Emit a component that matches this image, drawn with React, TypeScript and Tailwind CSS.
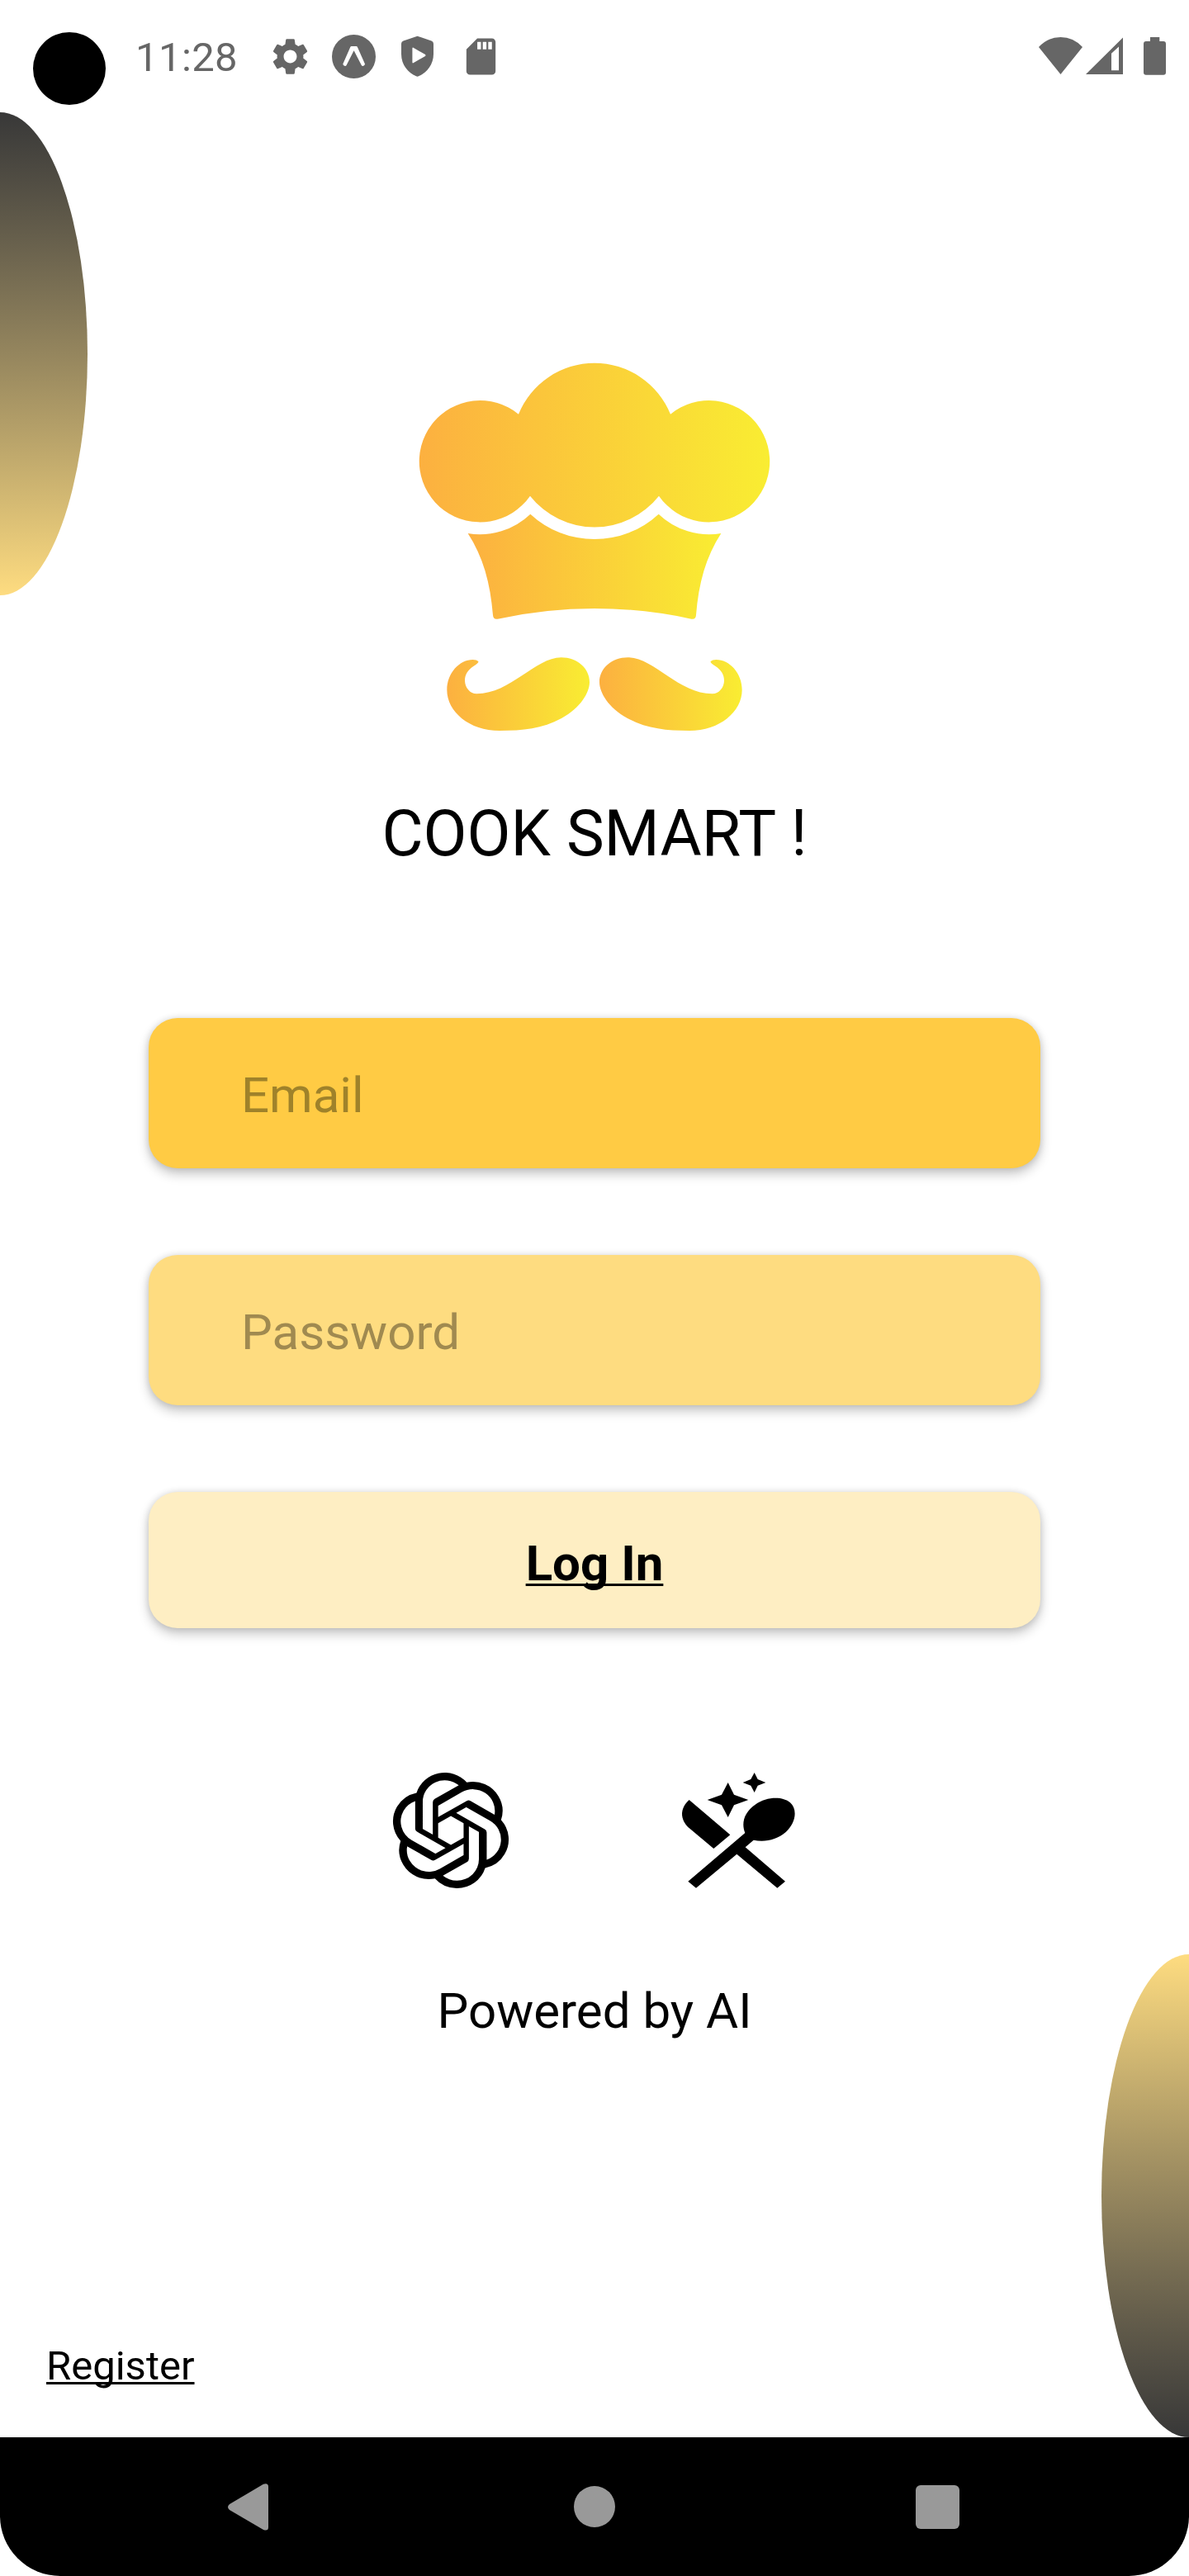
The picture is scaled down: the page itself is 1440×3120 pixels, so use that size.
import React from "react";
import { SiOpenai } from "react-icons/si";
import { MdSettings, MdSdCard } from "react-icons/md";

function ExpoIcon() {
  return (
    <svg className="size-[53px]" viewBox="0 0 53 53">
      <circle cx="26.5" cy="26.5" r="26.5" fill="#666" />
      <path
        fill="#fff"
        d="M23.6 14h6c.6 0 1 .3 1.300 .9L40 35.500c-.3 1.300-1.400 2.400-2.800 2.500-.6 0-1-.3-1.400-1L26.600 19.300 17.600 37c-.4.7-.8 1-1.400 1-1.400-.1-2.600-1.200-2.900-2.500L22.300 14.900c.3-.6.7-.9 1.300-.9z"
      />
    </svg>
  );
}

function ShieldIcon() {
  return (
    <svg className="h-[53px] w-[53px]" viewBox="0 0 53 53">
      <path
        fill="#666"
        fillRule="evenodd"
        d="M26.500 1.700 43.500 7.600Q46 8.600 46 11V23.500C46 36.500 37.500 46.500 28 50.300Q26.500 51 25 50.300C15.500 46.500 7 36.500 7 23.500V11Q7 8.600 9.500 7.600ZM20.400 16.500V33.500Q20.600 35 22 34L36 26Q37 25 36 24L22 16Q20.600 15 20.400 16.500Z"
      />
    </svg>
  );
}

function StatusBar() {
  return (
    <header className="flex h-[136px] items-start text-[#666]">
      <div className="mt-[39px] ml-10 size-[88px] rounded-full bg-black" />
      <span className="mt-[41px] ml-[36px] w-[123px] text-[49px] leading-[57px] tracking-[0.4px] whitespace-nowrap">
        11:28
      </span>
      <div className="mt-[42px] ml-[38px] flex gap-6">
        <MdSettings className="size-[53px]" />
        <ExpoIcon />
        <ShieldIcon />
        <MdSdCard className="size-[53px]" />
      </div>
      <div className="mt-[45px] mr-7 ml-auto flex items-start">
        <svg className="h-[46px] w-[53px]" viewBox="0 0 53 46" fill="currentColor">
          <path d="M0 12Q11 0 26.500 0T53 12L26.500 45Z" />
        </svg>
        <svg className="ml-1 h-[46px] w-[45px]" viewBox="0 0 45 46" fill="currentColor" fillRule="evenodd">
          <path d="M0 45 45 .5V45ZM31 40.300H40V11.500L31 19.700Z" />
        </svg>
        <svg className="ml-[25px] h-[46px] w-[27px]" viewBox="0 0 27 46" fill="currentColor">
          <path d="M8 0H19.300V5H24Q27 5 27 8V42.700Q27 45.700 24 45.700H3Q0 45.700 0 42.700V8Q0 5 3 5H8Z" />
        </svg>
      </div>
    </header>
  );
}

const MOUSTACHE =
  "M268 1143Q262 1137 248 1137C200 1137 154 1185 154 1247C154 1325 235 1395 345 1395C430 1395 500 1388 570 1350C640 1312 672 1256 672 1219C672 1168 627 1129 569 1129C475 1129 385 1261 262 1261C237 1261 219 1238 219 1213C219 1192 229 1175 250 1161Q271 1148 268 1143Z";

function ChefLogo() {
  return (
    <svg className="h-[480px] w-[460px]" viewBox="0 0 1380 1440">
      <defs>
        <linearGradient id="warm">
          <stop offset="0" stopColor="#fcb040" />
          <stop offset="1" stopColor="#f9ed32" />
        </linearGradient>
        <linearGradient id="warmFlipped">
          <stop offset="0" stopColor="#f9ed32" />
          <stop offset="1" stopColor="#fcb040" />
        </linearGradient>
      </defs>
      <path
        fill="url(#warm)"
        d="M414 245A298 298 0 0 1 966 245A221 221 0 1 1 924 542A298 298 0 0 1 456 542A221 221 0 1 1 414 245Z"
      />
      <path
        fill="url(#warm)"
        d="M230 678A266 266 0 0 0 457 608A343 343 0 0 0 923 608A266 266 0 0 0 1150 678C1095 762 1068 860 1059 975Q1058 992 1042 989Q690 913 338 989Q322 992 321 975C312 860 285 762 230 678Z"
      />
      <path fill="url(#warm)" d={MOUSTACHE} />
      <path fill="url(#warmFlipped)" d={MOUSTACHE} transform="translate(1380 0) scale(-1 1)" />
    </svg>
  );
}

function UtensilsIcon() {
  return (
    <svg className="h-[140px] w-[137px]" viewBox="1098 81 411 420" preserveAspectRatio="none">
      <path d="M1361 81 1373 105 1402 117 1373 128 1361 153 1348 128 1319 117 1348 105Z" />
      <path d="M1265 117 1287 161 1339 180 1287 199 1265 243 1242 199 1190 180 1242 161Z" />
      <path d="M1124 180 1273 307 1213 357 1121 280C1090 250 1090 210 1124 180Z" />
      <path d="M1120 476 1327 300C1312 263 1325 224 1364 197C1405 168 1463 166 1491 190C1519 216 1511 263 1475 297C1442 326 1397 335 1358 326L1328 352 1473 476 1444 500 1297 377 1149 500Z" />
    </svg>
  );
}

const CARD =
  "flex w-[1080px] rounded-[35px] shadow-[0_7px_14px_rgba(0,0,0,0.22),0_0_8px_rgba(0,0,0,0.12)]";

export default function App() {
  return (
    <div className="flex h-[3120px] w-[1440px] flex-col overflow-hidden bg-white font-[Roboto,sans-serif] text-black">
      <StatusBar />
      <main className="relative flex h-[2816px] flex-col items-center">
        <div className="absolute top-0 left-[-106px] h-[585px] w-[212px] rounded-[50%] bg-linear-to-b from-[#383838] to-[#fedc80]" />
        <div className="absolute right-[-106px] bottom-0 h-[585px] w-[212px] rounded-[50%] bg-linear-to-b from-[#fedc80] to-[#383838]" />
        <div className="mt-[284px]">
          <ChefLogo />
        </div>
        <h1 className="mt-[65px] text-[77px] leading-[90px]">COOK SMART !</h1>
        <form className="mt-[178px] flex flex-col">
          <input
            type="text"
            placeholder="Email"
            className={`${CARD} h-[182px] bg-[#ffcb44] px-[112px] pt-[4px] text-[60px] placeholder:text-[#9f822a] placeholder:opacity-100`}
          />
          <input
            type="text"
            placeholder="Password"
            className={`${CARD} mt-[105px] h-[182px] bg-[#fedc80] px-[112px] pt-[4px] text-[60px] placeholder:text-[#a08a50] placeholder:opacity-100`}
          />
          <button
            type="button"
            className={`${CARD} mt-[105px] h-[165px] items-center justify-center bg-[#feeec3] pt-[8px] text-[60px] font-bold underline decoration-[3px] underline-offset-[4px] [text-decoration-skip-ink:none]`}
          >
            Log In
          </button>
        </form>
        <div className="mt-[175px] mr-[3px] flex w-[488px] justify-between">
          <SiOpenai className="h-[140px] w-[142px]" preserveAspectRatio="none" />
          <UtensilsIcon />
        </div>
        <p className="mt-[114px] text-[60px] leading-[70px]">Powered by AI</p>
        <a className="mt-auto mb-[58px] ml-14 self-start text-[49px] leading-[57px] underline decoration-[3px] underline-offset-[3px] [text-decoration-skip-ink:none]">
          Register
        </a>
      </main>
      <nav className="flex h-[168px] items-center rounded-b-[73px] bg-black">
        <svg className="ml-[276px] h-[57px] w-[49px]" viewBox="0 0 49 57" fill="#999">
          <path d="M2 25 43 .8Q49-1 49 4V53Q49 58 43 56L2 32Q-2 28.500 2 25Z" />
        </svg>
        <div className="ml-[370px] size-[50px] rounded-full bg-[#999]" />
        <div className="ml-[364px] size-[53px] rounded-[6px] bg-[#999]" />
      </nav>
    </div>
  );
}
